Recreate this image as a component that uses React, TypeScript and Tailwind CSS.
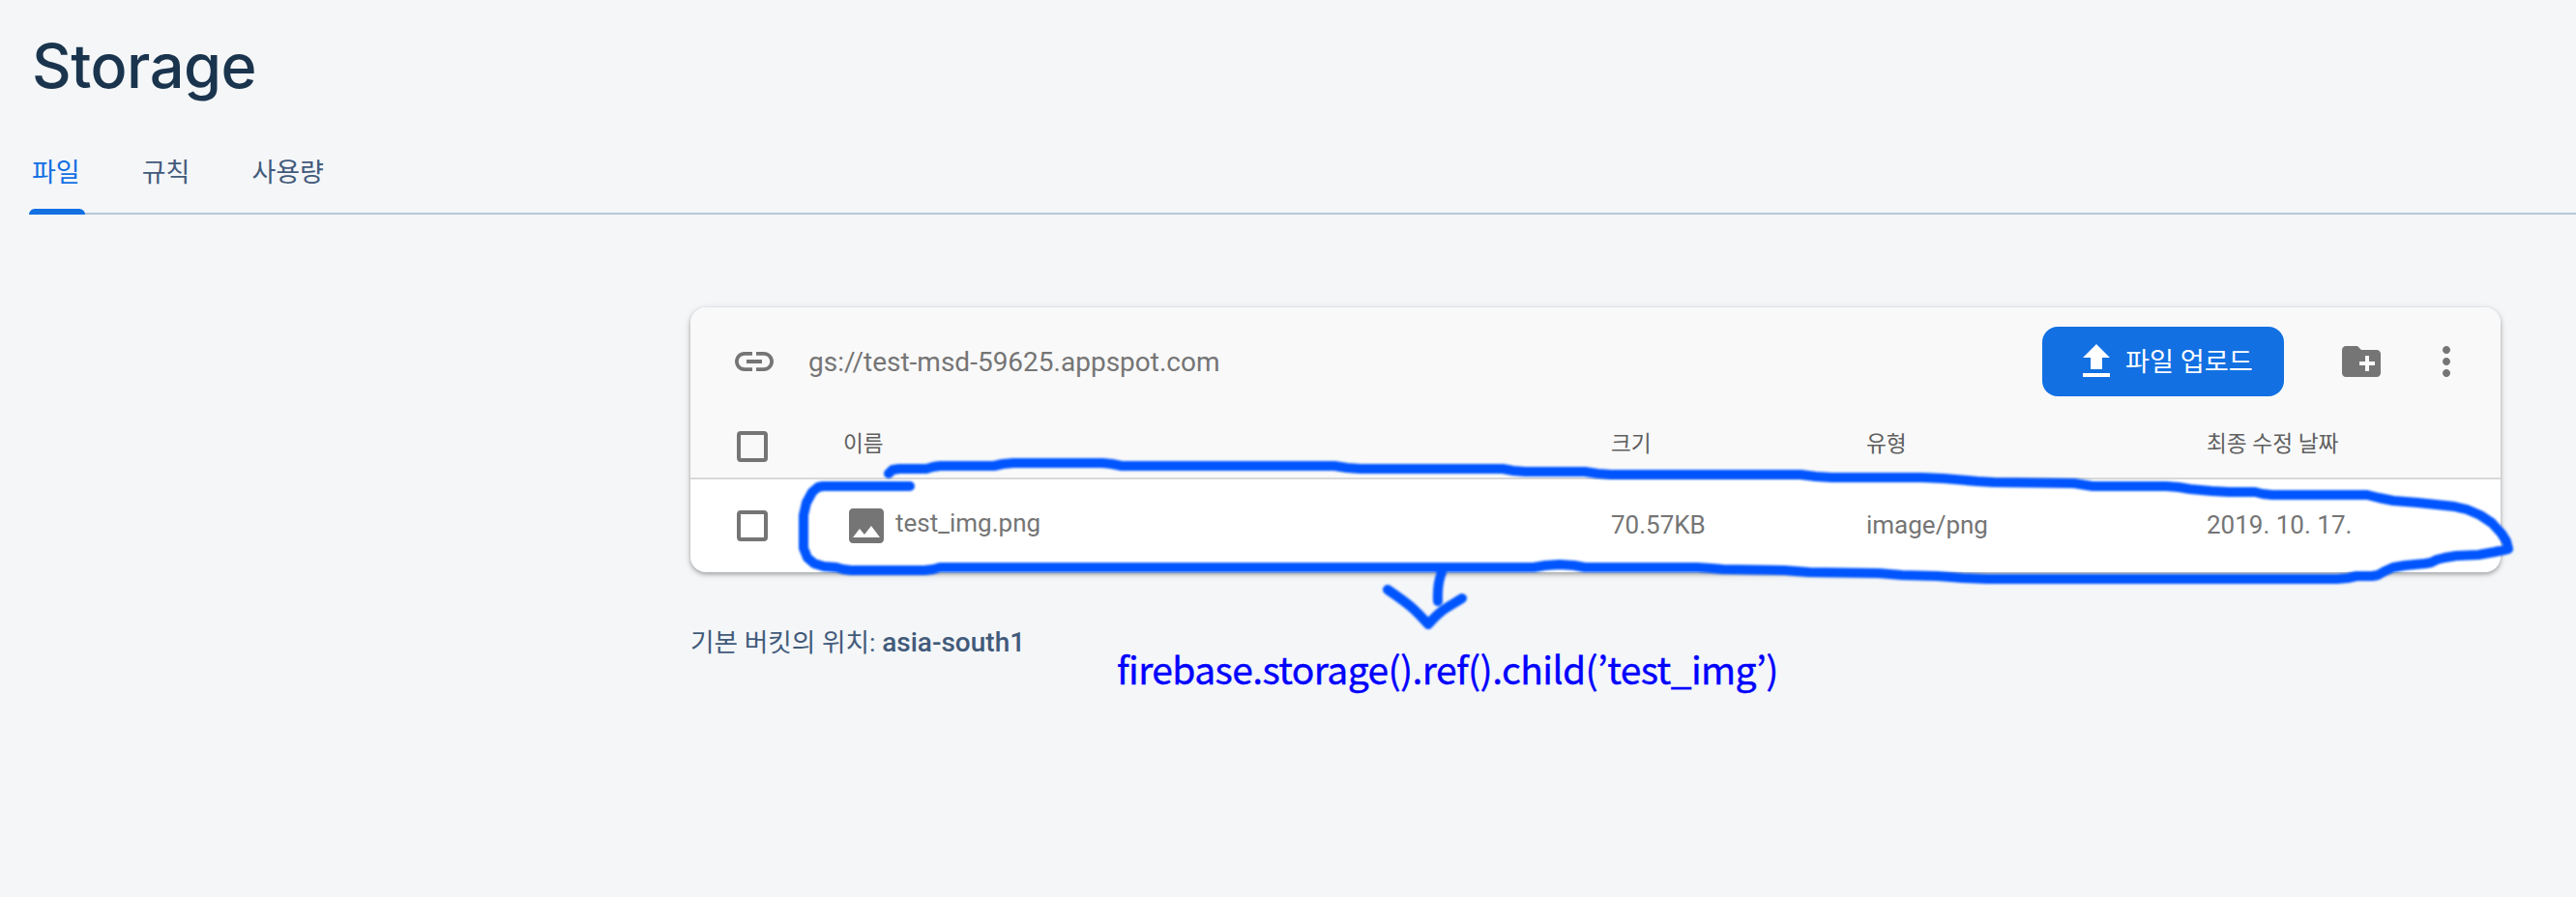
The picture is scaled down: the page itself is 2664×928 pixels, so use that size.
import { MdCreateNewFolder, MdImage, MdLink, MdMoreVert, MdUpload } from "react-icons/md";

const tabs = [
  { label: "파일", active: true },
  { label: "규칙", active: false },
  { label: "사용량", active: false },
];

const outline =
  "919,490 923,486 930,485 958,485 965,483 972,482 1028,482 1037,480 1048,479 1140,479 1150,480 1160,482 1380,482 1393,484 1407,485 1554,485 1565,487 1577,488 1639,488 1652,490 1666,491 1862,491 1878,493 1894,494 1987,494 2010,495 2045,498 2062,499 2145,500 2164,503 2240,503 2253,504 2265,506 2287,508 2305,509 2332,509 2340,511 2350,512 2448,512 2460,515 2475,518 2500,520 2538,524 2551,527 2565,533 2577,541 2587,552 2592,560 2594,568 2580,571 2563,574 2540,575 2528,577 2520,579 2514,582 2508,583 2487,585 2475,587 2466,591 2459,595 2453,596 2437,596 2428,598 2417,599 2055,599 2030,598 2004,596 1967,595 1955,594 1943,593 1871,592 1858,591 1845,590 1782,589 1770,588 1755,587 1639,587 1628,585 1613,584 1598,585 1586,587 972,587 965,589 956,590 880,590 872,589 865,587 852,586 842,583 835,577 831,567 831,533 834,520 840,509 846,504 851,503 941,503";

function Checkbox() {
  return <div className="size-8 shrink-0 rounded border-4 border-[#757575]" />;
}

export default function App() {
  return (
    <div className="relative h-[928px] w-[2664px] overflow-hidden bg-[#f4f6f8] font-[Roboto,'Noto_Sans_CJK_KR',sans-serif]">
      <header>
        <h1 className="flex h-[136px] items-center pl-[33px] font-[Inter,sans-serif] text-[63px] font-medium tracking-[-0.5px] text-[#1a344d]">
          Storage
        </h1>
        <nav className="ml-[30px] flex h-[86px] gap-14 border-b-2 border-[#b8c8d9]">
          {tabs.map((tab) => (
            <div
              key={tab.label}
              className={
                tab.active
                  ? "flex h-[86px] flex-col justify-between text-[#1270e2]"
                  : "flex h-[86px] flex-col justify-between text-[#425a7a]"
              }
            >
              <span className="pl-[3px] pr-[5px] pt-[26px] text-[27px] leading-[34px]">{tab.label}</span>
              {tab.active && <i className="block h-1.5 rounded-t-md bg-[#1270e2]" />}
            </div>
          ))}
        </nav>
      </header>

      <main className="ml-[714px] mt-24 w-[1872px]">
        <section className="overflow-hidden rounded-2xl bg-white shadow-[0_2px_4px_rgba(0,0,0,0.28),0_2px_8px_rgba(0,0,0,0.12)]">
          <div className="flex h-28 items-center bg-[#f9f9f9] pl-[42px] text-[#757575]">
            <MdLink className="size-12" />
            <span className="ml-8 grow pt-0.5 text-[28px]">gs://test-msd-59625.appspot.com</span>
            <button className="flex h-[72px] w-[250px] items-center rounded-2xl bg-[#1270e2] pl-8 text-white">
              <MdUpload className="size-12" />
              <span className="ml-1.5 pt-0.5 text-[27.2px]">파일 업로드</span>
            </button>
            <MdCreateNewFolder className="ml-14 size-12" />
            <MdMoreVert className="ml-10 mr-8 size-12" />
          </div>
          <div className="grid h-[66px] grid-cols-[110px_794px_264px_352px_1fr] items-center border-b-2 border-[#d9d9d9] bg-[#f9f9f9] pl-12 text-[22.7px] text-[#5f5f5f]">
            <Checkbox />
            <span className="pb-1">이름</span>
            <span className="pb-1">크기</span>
            <span className="pb-1">유형</span>
            <span className="pb-1">최종 수정 날짜</span>
          </div>
          <div className="grid h-24 grid-cols-[110px_794px_264px_352px_1fr] items-center pl-12 text-[26px] text-[#757575]">
            <Checkbox />
            <span className="flex items-center">
              <MdImage className="size-12" />
              <span className="ml-1.5 pb-1.5">test_img.png</span>
            </span>
            <span className="pb-0.5">70.57KB</span>
            <span className="pb-0.5">image/png</span>
            <span className="pb-0.5">2019. 10. 17.</span>
          </div>
        </section>
        <p className="mt-[53px] text-[26.7px] leading-10 text-[#425a7a]">
          기본 버킷의 위치: <b className="text-[28px] font-medium">asia-south1</b>
        </p>
      </main>

      <svg className="absolute left-0 top-0 h-[928px] w-[2664px]" viewBox="0 0 2664 928" fill="none">
        <g stroke="#0055ff" strokeWidth="10" strokeLinecap="round" strokeLinejoin="round" className="blur-[1px]">
          <polyline points={outline} />
          <path d="M1491 592Q1486 605 1487 622M1435 610C1457 625 1463 630 1477 646C1491 630 1496 629 1512 619" />
        </g>
      </svg>
      <p className="absolute left-[1155px] top-[665px] whitespace-nowrap font-['Noto_Sans_CJK_KR',sans-serif] text-[39px] leading-[52px] tracking-[-0.6px] text-[#0000ff] [-webkit-text-stroke:0.4px_#0000ff]">
        firebase.storage().ref().child(’test_img’)
      </p>
    </div>
  );
}
